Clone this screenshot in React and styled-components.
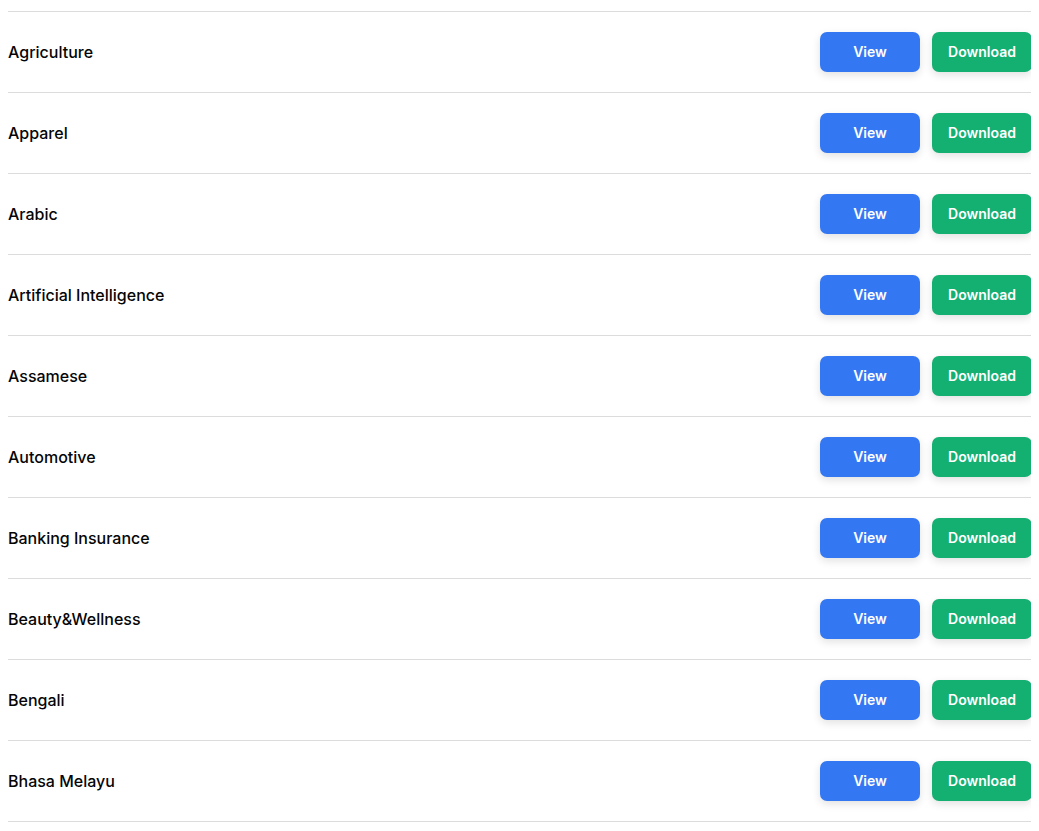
import React from "react";
import styled, { createGlobalStyle } from "styled-components";

const GlobalStyle = createGlobalStyle`
  body {
    margin: 8px;
    background: #ffffff;
    font-family: Inter, "Noto Sans", sans-serif;
    color: #000000;
  }
`;

const categories = [
  "Agriculture",
  "Apparel",
  "Arabic",
  "Artificial Intelligence",
  "Assamese",
  "Automotive",
  "Banking Insurance",
  "Beauty&Wellness",
  "Bengali",
  "Bhasa Melayu",
];

const List = styled.ul`
  list-style: none;
  margin: 3px 0 0;
  padding: 0;
  width: 1024px;
`;

const Row = styled.li`
  display: flex;
  align-items: center;
  justify-content: space-between;
  height: 80px;
  border-top: 1px solid #dcdcdc;
  &:last-child {
    border-bottom: 1px solid #dcdcdc;
  }
`;

const Name = styled.span`
  font-size: 16px;
  font-weight: 500;
  color: #050505;
`;

const Actions = styled.div`
  display: flex;
  gap: 12px;
`;

const Button = styled.button`
  width: 100px;
  height: 40px;
  padding: 0 0 1px;
  border: none;
  border-radius: 7px;
  background: ${(p) => (p.$variant === "green" ? "#14b072" : "#3477f3")};
  color: #ffffff;
  font-family: Inter, "Noto Sans", sans-serif;
  font-size: 14px;
  font-weight: 600;
  box-shadow: 0 3px 8px rgba(0, 0, 0, 0.12);
  cursor: pointer;
`;

const App = () => {
  return (
    <>
      <GlobalStyle />
      <List>
        {categories.map((c) => (
          <Row key={c}>
            <Name>{c}</Name>
            <Actions>
              <Button>View</Button>
              <Button $variant="green">Download</Button>
            </Actions>
          </Row>
        ))}
      </List>
    </>
  );
};

export default App;
